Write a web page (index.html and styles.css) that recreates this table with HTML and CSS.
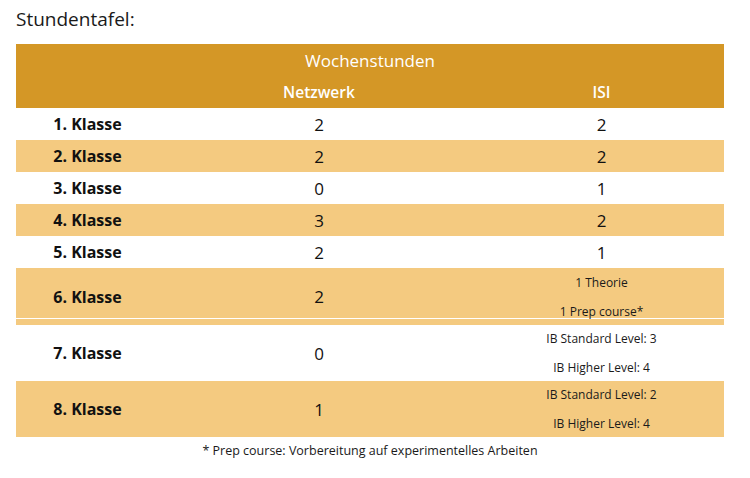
FILE: index.html
```html
<!DOCTYPE html>
<html lang="de">
<head>
<meta charset="utf-8">
<title>Stundentafel</title>
<link rel="stylesheet" href="styles.css">
</head>
<body>
<div class="page">
  <h2 class="title">Stundentafel:</h2>
  <table class="plan">
    <colgroup>
      <col class="c-label">
      <col class="c-net">
      <col class="c-isi">
    </colgroup>
    <thead>
      <tr class="head">
        <th colspan="3" class="head-span">Wochenstunden</th>
      </tr>
      <tr class="head">
        <th></th>
        <th class="sub">Netzwerk</th>
        <th class="sub">ISI</th>
      </tr>
    </thead>
    <tbody>
      <tr class="row"><td class="label">1. Klasse</td><td class="num">2</td><td class="num">2</td></tr>
      <tr class="row alt"><td class="label">2. Klasse</td><td class="num">2</td><td class="num">2</td></tr>
      <tr class="row"><td class="label">3. Klasse</td><td class="num">0</td><td class="num">1</td></tr>
      <tr class="row alt"><td class="label">4. Klasse</td><td class="num">3</td><td class="num">2</td></tr>
      <tr class="row"><td class="label">5. Klasse</td><td class="num">2</td><td class="num">1</td></tr>
      <tr class="row alt tall split">
        <td class="label">6. Klasse</td><td class="num">2</td>
        <td class="multi"><div class="lines"><span>1 Theorie</span><span>1 Prep course*</span></div></td>
      </tr>
      <tr class="row tall">
        <td class="label">7. Klasse</td><td class="num">0</td>
        <td class="multi"><div class="lines"><span>IB Standard Level: 3</span><span>IB Higher Level: 4</span></div></td>
      </tr>
      <tr class="row alt tall">
        <td class="label">8. Klasse</td><td class="num">1</td>
        <td class="multi"><div class="lines"><span>IB Standard Level: 2</span><span>IB Higher Level: 4</span></div></td>
      </tr>
    </tbody>
  </table>
  <p class="note">* Prep course: Vorbereitung auf experimentelles Arbeiten</p>
</div>
</body>
</html>
```

FILE: styles.css
```css
html, body {
  margin: 0;
  padding: 0;
  background: #ffffff;
}

body {
  font-family: "Open Sans", "DejaVu Sans", sans-serif;
  color: #111111;
}

.page {
  padding: 7px 26px 0 16px;
  width: 708px;
}

.title {
  margin: 0;
  height: 37px;
  font-size: 19px;
  font-weight: 400;
  line-height: 24px;
  color: #1a1a1a;
}

.plan {
  width: 708px;
  border-collapse: collapse;
  border-spacing: 0;
  table-layout: fixed;
}

.c-label { width: 143px; }
.c-net { width: 320px; }
.c-isi { width: 245px; }

.head {
  background: #d49726;
  height: 32px;
}

.head th {
  padding: 0;
  color: #ffffff;
  text-align: center;
  vertical-align: middle;
}

.head-span {
  font-size: 17px;
  font-weight: 400;
}

.sub {
  font-size: 15.5px;
  font-weight: 600;
}

.row {
  height: 32px;
  background: #ffffff;
}

.row.alt {
  background: #f4ca80;
}

.row td {
  padding: 0;
  text-align: center;
  vertical-align: middle;
}

.row.tall {
  height: 56px;
}

.row.split {
  height: 57px;
}

.row.split td {
  background: linear-gradient(to bottom, #f4ca80 0, #f4ca80 50px, #ffffff 50px, #ffffff 51px, #f4ca80 51px);
}

.label {
  font-size: 16px;
  font-weight: 700;
  color: #111111;
}

.num {
  font-size: 17px;
  font-weight: 400;
  color: #111111;
}

.lines {
  display: flex;
  flex-direction: column;
  gap: 2px;
}

.lines span {
  display: block;
  font-size: 12px;
  line-height: 27px;
  color: #1a1a1a;
}

.note {
  margin: 5px 0 0 0;
  text-align: center;
  font-size: 12.5px;
  line-height: 17px;
  color: #1a1a1a;
}
```
